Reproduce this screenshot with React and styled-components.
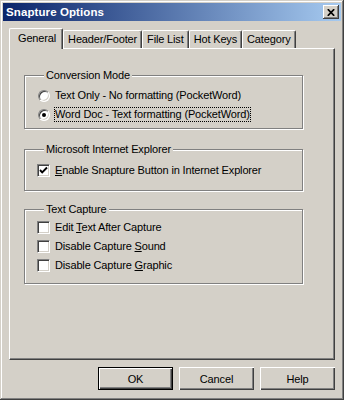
import React from "react";
import styled, { createGlobalStyle } from "styled-components";

const GlobalStyle = createGlobalStyle`
  html, body {
    margin: 0;
    padding: 0;
    background: #d4d0c8;
  }
  body {
    font-family: "Liberation Sans", Arial, sans-serif;
    font-size: 11px;
    letter-spacing: -0.15px;
    color: #000;
  }
  * {
    box-sizing: border-box;
  }
`;

const tabs = ["General", "Header/Footer", "File List", "Hot Keys", "Category"];

function CloseGlyph() {
  return (
    <svg width="8" height="7" viewBox="0 0 8 7">
      <path d="M0.8 0.2 L7.2 6.8 M7.2 0.2 L0.8 6.8" stroke="#000" strokeWidth="1.7" />
    </svg>
  );
}

function CheckGlyph() {
  return (
    <svg width="9" height="9" viewBox="0 0 9 9">
      <path d="M1 4 L3.2 6.3 L8 1.5" stroke="#000" strokeWidth="1.9" fill="none" />
    </svg>
  );
}

function App() {
  return (
    <>
      <GlobalStyle />
      <Window>
        <TitleBar>
          <Title>Snapture Options</Title>
          <CloseButton>
            <CloseGlyph />
          </CloseButton>
        </TitleBar>

        <Content>
          <TabStrip>
            {tabs.map((t, i) => (
              <Tab key={t} $active={i === 0}>
                {t}
              </Tab>
            ))}
          </TabStrip>

          <Panel>
            <Group $top={0} $pt={4} $pb={4}>
              <Legend>Conversion Mode</Legend>
              <Option>
                <Radio />
                <Label>Text Only - No formatting (PocketWord)</Label>
              </Option>
              <Option>
                <Radio $checked />
                <Label $focused>Word Doc - Text formatting (PocketWord)</Label>
              </Option>
            </Group>

            <Group $top={14} $pt={5} $pb={10}>
              <Legend>Microsoft Internet Explorer</Legend>
              <Option>
                <Check>
                  <CheckGlyph />
                </Check>
                <Label>
                  <u>E</u>nable Snapture Button in Internet Explorer
                </Label>
              </Option>
            </Group>

            <Group $top={12} $pt={2} $pb={8}>
              <Legend>Text Capture</Legend>
              <Option>
                <Check />
                <Label>
                  Edit <u>T</u>ext After Capture
                </Label>
              </Option>
              <Option>
                <Check />
                <Label>
                  Disable Capture <u>S</u>ound
                </Label>
              </Option>
              <Option>
                <Check />
                <Label>
                  Disable Capture <u>G</u>raphic
                </Label>
              </Option>
            </Group>
          </Panel>

          <ButtonRow>
            <Button $default>OK</Button>
            <Button>Cancel</Button>
            <Button>Help</Button>
          </ButtonRow>
        </Content>
      </Window>
    </>
  );
}

export default App;

const Window = styled.div`
  width: 344px;
  height: 400px;
  padding: 3px;
  background: #d4d0c8;
  box-shadow: inset -1px -1px #404040, inset 1px 1px #d4d0c8,
    inset -2px -2px #808080, inset 2px 2px #fff;
  display: flex;
  flex-direction: column;
`;

const TitleBar = styled.div`
  height: 18px;
  display: flex;
  align-items: center;
  justify-content: space-between;
  padding: 0 2px 0 3px;
  background: linear-gradient(to right, #0a246a, #a6caf0);
`;

const Title = styled.span`
  color: #fff;
  font-weight: bold;
  font-size: 11.5px;
  letter-spacing: 0.1px;
`;

const CloseButton = styled.div`
  width: 16px;
  height: 14px;
  display: flex;
  align-items: center;
  justify-content: center;
  background: #d4d0c8;
  box-shadow: inset -1px -1px #404040, inset 1px 1px #fff,
    inset -2px -2px #808080;
`;

const Content = styled.div`
  flex: 1;
  padding: 7px 6px 0 6px;
  display: flex;
  flex-direction: column;
`;

const TabStrip = styled.div`
  display: flex;
  align-items: flex-end;
  height: 20px;
`;

const Tab = styled.div`
  position: relative;
  z-index: ${(p) => (p.$active ? 1 : 0)};
  height: ${(p) => (p.$active ? "21px" : "18px")};
  margin-bottom: ${(p) => (p.$active ? "-1px" : "0")};
  padding: ${(p) => (p.$active ? "0 6px 3px 8px" : "0 4px 1px 4px")};
  display: flex;
  align-items: center;
  background: #d4d0c8;
  border-top: 1px solid #fff;
  border-left: 1px solid #fff;
  border-right: 1px solid #404040;
  border-top-left-radius: 2px;
  border-top-right-radius: 2px;
  box-shadow: inset -1px 0 #808080;
  white-space: nowrap;
`;

const Panel = styled.div`
  height: 312px;
  padding: 20px 0 0 14px;
  border-top: 1px solid #fff;
  border-left: 1px solid #fff;
  border-right: 1px solid #404040;
  border-bottom: 1px solid #404040;
  box-shadow: inset -1px -1px #808080;
`;

const Group = styled.fieldset`
  width: 279px;
  margin: ${(p) => p.$top}px 0 0 0;
  padding: ${(p) => p.$pt}px 0 ${(p) => p.$pb}px 12px;
  min-width: 0;
  border: 1px solid #808080;
  box-shadow: inset 1px 1px #fff, 1px 1px #fff;
`;

const Legend = styled.legend`
  margin-left: 7px;
  padding: 0 2px;
  line-height: 13px;
  background: #d4d0c8;
`;

const Option = styled.div`
  height: 19px;
  display: flex;
  align-items: center;
  gap: 4px;
`;

const Radio = styled.span`
  position: relative;
  flex: none;
  width: 12px;
  height: 12px;
  margin-left: 1px;
  border-radius: 50%;
  background: #fff;
  border: 1px solid;
  border-color: #808080 #fff #fff #808080;
  box-shadow: inset 1px 1px #404040, inset -1px -1px #d4d0c8;

  &::after {
    content: "";
    display: ${(p) => (p.$checked ? "block" : "none")};
    position: absolute;
    left: 3px;
    top: 3px;
    width: 4px;
    height: 4px;
    border-radius: 50%;
    background: #000;
  }
`;

const Check = styled.span`
  flex: none;
  width: 13px;
  height: 13px;
  display: flex;
  align-items: center;
  justify-content: center;
  background: #fff;
  border: 1px solid;
  border-color: #808080 #fff #fff #808080;
  box-shadow: inset 1px 1px #404040, inset -1px -1px #d4d0c8;
`;

const Label = styled.span`
  padding: 1px 1px;
  line-height: 13px;
  white-space: nowrap;
  outline: ${(p) => (p.$focused ? "1px dotted #000" : "none")};
  outline-offset: -1px;
`;

const ButtonRow = styled.div`
  display: flex;
  justify-content: flex-end;
  gap: 6px;
  margin-top: 7px;
`;

const Button = styled.div`
  width: 75px;
  height: 23px;
  display: flex;
  align-items: center;
  justify-content: center;
  background: #d4d0c8;
  border: ${(p) => (p.$default ? "1px solid #000" : "none")};
  box-shadow: inset 1px 1px #fff, inset -1px -1px #404040,
    inset -2px -2px #808080;
`;
